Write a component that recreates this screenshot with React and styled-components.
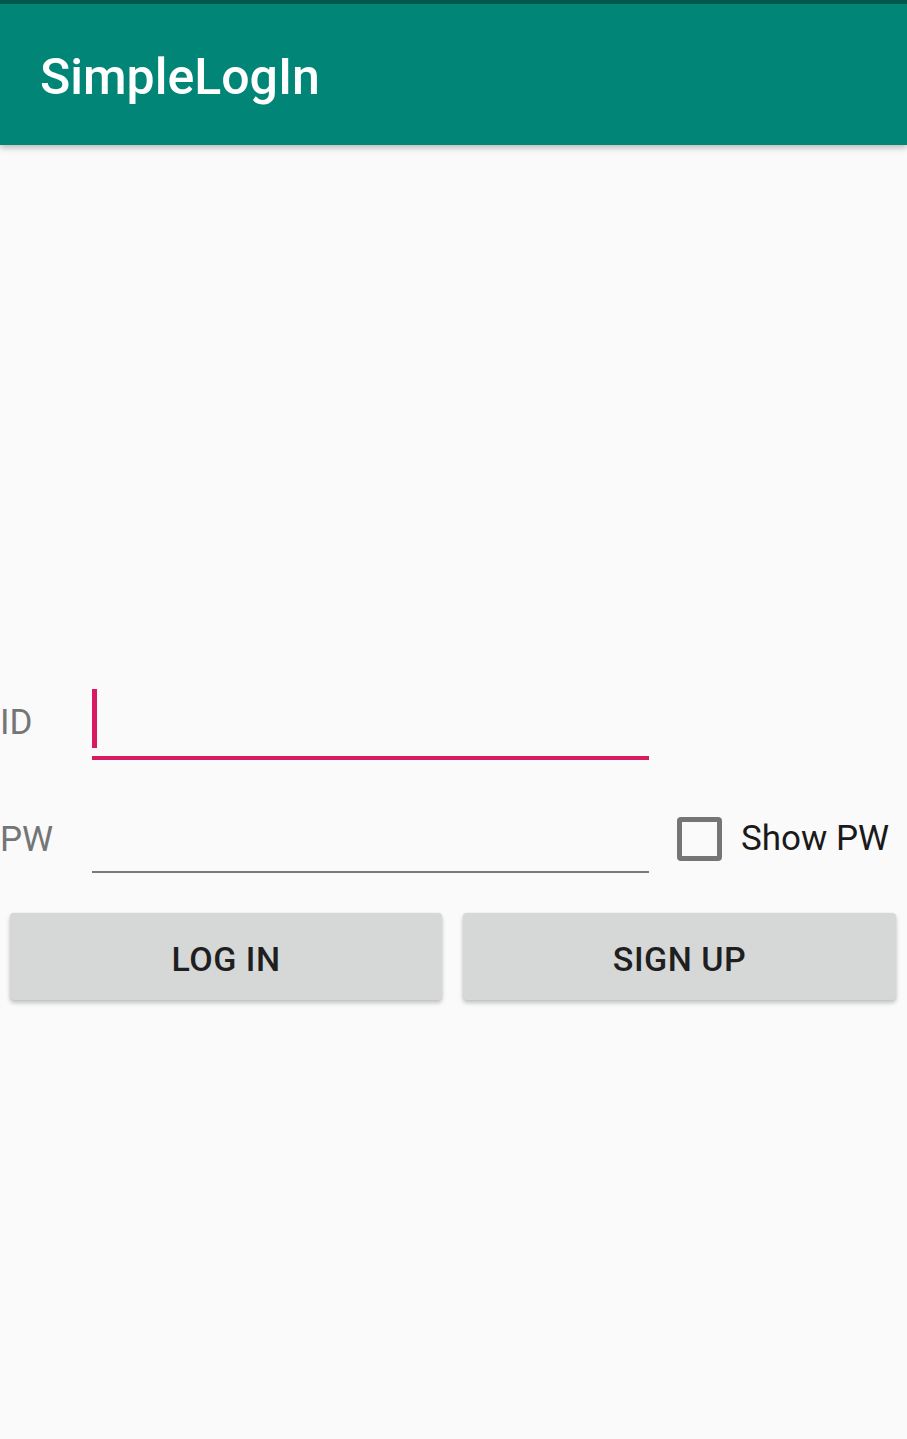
import React from "react";
import styled, { createGlobalStyle } from "styled-components";

const GlobalStyle = createGlobalStyle`
  html, body {
    margin: 0;
    padding: 0;
    background: #fafafa;
    font-family: Roboto, "Liberation Sans", sans-serif;
  }
`;

const Page = styled.div`
  min-height: 1439px;
  background: #fafafa;
`;

const AppBar = styled.header`
  height: 141px;
  border-top: 4px solid #00574b;
  background: #008577;
  display: flex;
  align-items: center;
  padding-left: 40px;
  box-shadow: 0 3px 6px rgba(0, 0, 0, 0.25);
  position: relative;
`;

const Title = styled.h1`
  margin: 4px 0 0;
  color: #ffffff;
  font-size: 50px;
  font-weight: 500;
  letter-spacing: 0;
`;

const Form = styled.main`
  padding-top: 540px;
  display: flex;
  flex-direction: column;
`;

const Row = styled.div`
  display: grid;
  grid-template-columns: 92px 557px 1fr;
  align-items: center;
  margin-bottom: ${(p) => p.gap || 0}px;
`;

const Label = styled.span`
  color: #757575;
  font-size: 35px;
  padding-top: ${(p) => p.offset || 0}px;
`;

const Field = styled.div`
  height: 71px;
  display: flex;
  align-items: center;
  border-bottom: ${(p) => (p.focused ? "4px solid #d81b60" : "2px solid #7a7a7a")};
`;

const Caret = styled.span`
  width: 5px;
  height: 59px;
  background: #d81b60;
  margin-bottom: 4px;
`;

const CheckWrap = styled.label`
  display: flex;
  align-items: center;
  padding-left: 28px;
  padding-top: 4px;
  gap: 19px;
`;

const Box = styled.span`
  width: 35px;
  height: 34px;
  border: 5px solid #757575;
  border-radius: 4px;
`;

const CheckText = styled.span`
  color: #1a1a1a;
  font-size: 35px;
`;

const Buttons = styled.div`
  display: grid;
  grid-template-columns: 432px 433px;
  gap: 21px;
  padding-left: 10px;
`;

const Button = styled.button`
  height: 87px;
  border: none;
  border-radius: 4px;
  background: #d6d7d7;
  color: #1f1f1f;
  font-family: Roboto, "Liberation Sans", sans-serif;
  font-size: 34px;
  font-weight: 500;
  letter-spacing: 0.5px;
  padding-top: 6px;
  box-shadow: 0 3px 4px rgba(0, 0, 0, 0.22), 0 0 2px rgba(0, 0, 0, 0.1);
`;

export default function App() {
  return (
    <Page>
      <GlobalStyle />
      <AppBar>
        <Title>SimpleLogIn</Title>
      </AppBar>
      <Form>
        <Row gap={40}>
          <Label>ID</Label>
          <Field focused>
            <Caret />
          </Field>
        </Row>
        <Row gap={40}>
          <Label offset={6}>PW</Label>
          <Field />
          <CheckWrap>
            <Box />
            <CheckText>Show PW</CheckText>
          </CheckWrap>
        </Row>
        <Buttons>
          <Button>LOG IN</Button>
          <Button>SIGN UP</Button>
        </Buttons>
      </Form>
    </Page>
  );
}
